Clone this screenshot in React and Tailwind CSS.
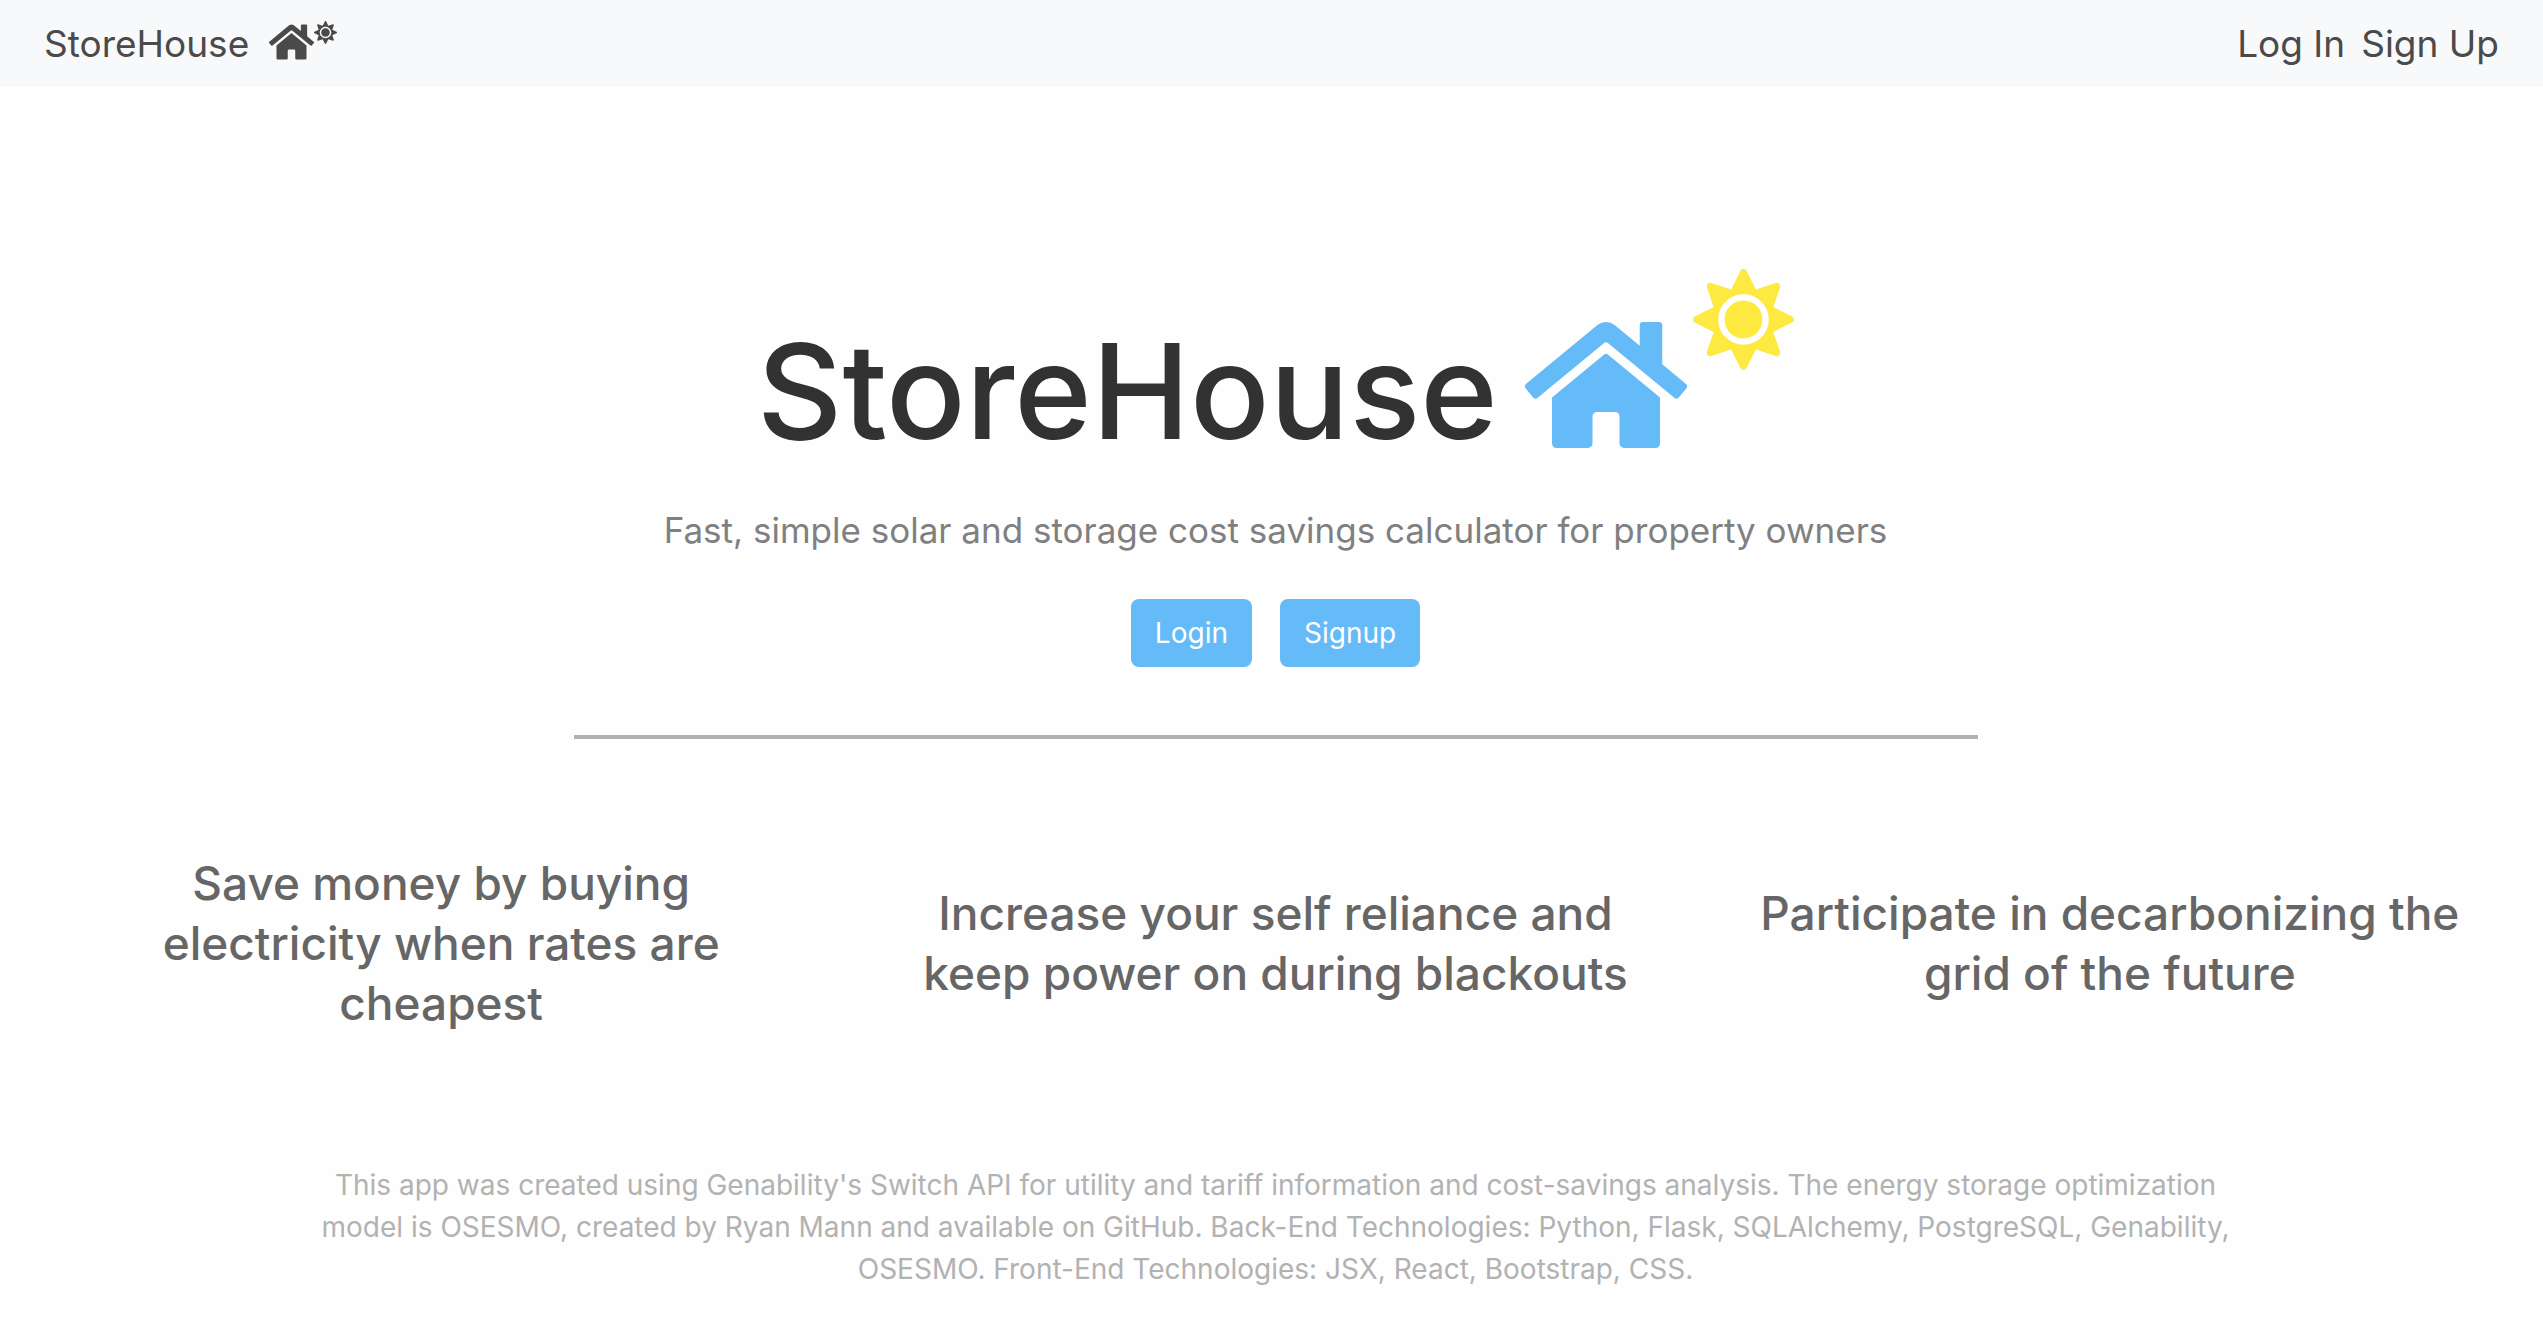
import React from "react";
import { FaHome, FaSun } from "react-icons/fa";

const features = [
  "Save money by buying electricity when rates are cheapest",
  "Increase your self reliance and keep power on during blackouts",
  "Participate in decarbonizing the grid of the future",
];

function NavBar() {
  return (
    <nav className="flex h-[87px] items-center justify-between bg-[#f8f9fb] px-11 text-[37px] text-[#4a4a4a]">
      <a href="#home" className="flex items-center gap-5">
        StoreHouse
        <span className="mb-1 flex items-start">
          <FaHome className="mt-px h-10 w-[45px]" />
          <FaSun className="size-[23px]" />
        </span>
      </a>
      <div className="flex items-center gap-4">
        <a href="#login">Log In</a>
        <a href="#signup">Sign Up</a>
      </div>
    </nav>
  );
}

function ActionButton({ children }) {
  return (
    <button type="button" className="h-[68px] rounded-lg bg-[#64bbf8] px-6 text-[28px] text-white">
      {children}
    </button>
  );
}

function Hero() {
  return (
    <header className="flex flex-col items-center pt-[182px]">
      <div className="flex items-end gap-[27px]">
        <h1 className="text-[132px] leading-[160px] font-medium text-[#323232]">StoreHouse</h1>
        <div className="mb-[14px] flex items-start gap-[6px]">
          <FaHome className="mt-11 h-36 w-[162px] text-[#64bbf8]" />
          <FaSun className="size-[101px] text-[#fee941]" />
        </div>
      </div>
      <p className="mt-[31px] text-[35px] leading-[56px] text-[#808080]">
        Fast, simple solar and storage cost savings calculator for property owners
      </p>
      <div className="mt-[41px] flex gap-7">
        <ActionButton>Login</ActionButton>
        <ActionButton>Signup</ActionButton>
      </div>
    </header>
  );
}

export default function App() {
  return (
    <div className="min-h-screen bg-[#fefefe] font-['Inter',sans-serif]">
      <NavBar />
      <main className="pl-2">
        <Hero />
        <hr className="mx-auto mt-[68px] w-full max-w-[1404px] border-t-4 border-[#b0b0b0]" />
        <section className="mx-4 mt-[114px] grid grid-cols-3 items-center text-center">
          {features.map((text) => (
            <h2 key={text} className="px-14 text-[46px] leading-[60px] font-medium text-[#666666]">
              {text}
            </h2>
          ))}
        </section>
        <footer className="mx-auto mt-[131px] max-w-[1920px] text-center text-[28px] leading-[42px] text-[#b2b2b2]">
          This app was created using Genability's Switch API for utility and tariff information and cost-savings
          analysis. The energy storage optimization model is OSESMO, created by Ryan Mann and available on GitHub.
          Back-End Technologies: Python, Flask, SQLAlchemy, PostgreSQL, Genability, OSESMO. Front-End Technologies:
          JSX, React, Bootstrap, CSS.
        </footer>
      </main>
    </div>
  );
}
